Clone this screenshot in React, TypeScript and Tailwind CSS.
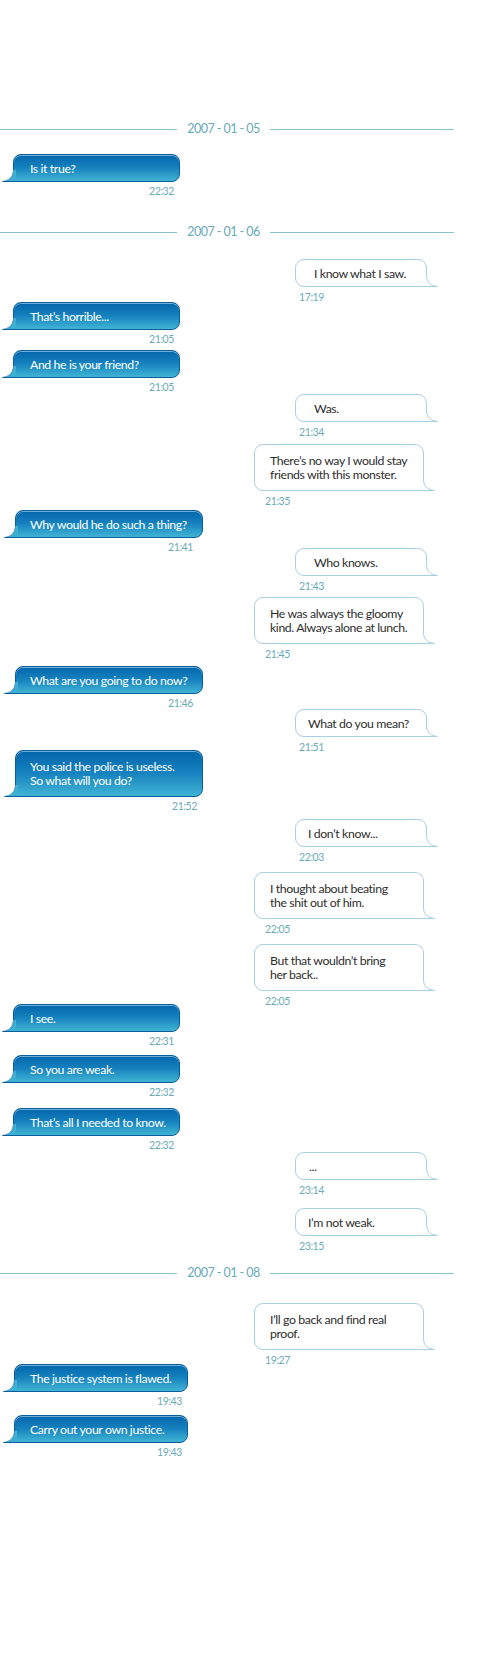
import React from "react";

type Msg =
  | { kind: "date"; label: string; mt: string }
  | {
      kind: "blue";
      lines: string[];
      time: string;
      mt: string;
      ml: string;
      w: string;
      pl: string;
      tsPr: string;
    }
  | {
      kind: "white";
      lines: string[];
      time: string;
      mt: string;
      pl: string;
    };

const items: Msg[] = [
  { kind: "date", label: "2007 - 01 - 05", mt: "mt-[119px]" },
  { kind: "blue", lines: ["Is it true?"], time: "22:32", mt: "mt-[15px]", ml: "ml-[13px]", w: "w-[167px]", pl: "pl-[16px]", tsPr: "pr-[6px]" },
  { kind: "date", label: "2007 - 01 - 06", mt: "mt-[22px]" },
  { kind: "white", lines: ["I know what I saw."], time: "17:19", mt: "mt-[17px]", pl: "pl-[18px]" },
  { kind: "blue", lines: ["That\u2019s horrible..."], time: "21:05", mt: "-mt-[6px]", ml: "ml-[13px]", w: "w-[167px]", pl: "pl-[16px]", tsPr: "pr-[6px]" },
  { kind: "blue", lines: ["And he is your friend?"], time: "21:05", mt: "mt-[2px]", ml: "ml-[13px]", w: "w-[167px]", pl: "pl-[16px]", tsPr: "pr-[6px]" },
  { kind: "white", lines: ["Was."], time: "21:34", mt: "-mt-[2px]", pl: "pl-[18px]" },
  { kind: "white", lines: ["There\u2019s no way I would stay", "friends with this monster."], time: "21:35", mt: "mt-[1px]", pl: "pl-[15px]" },
  { kind: "blue", lines: ["Why would he do such a thing?"], time: "21:41", mt: "-mt-[2px]", ml: "ml-[15px]", w: "w-[188px]", pl: "pl-[14px]", tsPr: "pr-[10px]" },
  { kind: "white", lines: ["Who knows."], time: "21:43", mt: "-mt-[8px]", pl: "pl-[18px]" },
  { kind: "white", lines: ["He was always the gloomy", "kind. Always alone at lunch."], time: "21:45", mt: "mt-[0px]", pl: "pl-[15px]" },
  { kind: "blue", lines: ["What are you going to do now?"], time: "21:46", mt: "mt-[1px]", ml: "ml-[15px]", w: "w-[188px]", pl: "pl-[14px]", tsPr: "pr-[10px]" },
  { kind: "white", lines: ["What do you mean?"], time: "21:51", mt: "-mt-[3px]", pl: "pl-[12px]" },
  { kind: "blue", lines: ["You said the police is useless.", "So what will you do?"], time: "21:52", mt: "-mt-[8px]", ml: "ml-[15px]", w: "w-[188px]", pl: "pl-[14px]", tsPr: "pr-[6px]" },
  { kind: "white", lines: ["I don\u2019t know..."], time: "22:03", mt: "mt-[4px]", pl: "pl-[12px]" },
  { kind: "white", lines: ["I thought about beating", "the shit out of him."], time: "22:05", mt: "mt-[4px]", pl: "pl-[15px]" },
  { kind: "white", lines: ["But that wouldn\u2019t bring", "her back.."], time: "22:05", mt: "mt-[4px]", pl: "pl-[15px]" },
  { kind: "blue", lines: ["I see."], time: "22:31", mt: "-mt-[8px]", ml: "ml-[13px]", w: "w-[167px]", pl: "pl-[16px]", tsPr: "pr-[6px]" },
  { kind: "blue", lines: ["So you are weak."], time: "22:32", mt: "mt-[5px]", ml: "ml-[13px]", w: "w-[167px]", pl: "pl-[16px]", tsPr: "pr-[6px]" },
  { kind: "blue", lines: ["That\u2019s all I needed to know."], time: "22:32", mt: "mt-[7px]", ml: "ml-[13px]", w: "w-[167px]", pl: "pl-[16px]", tsPr: "pr-[6px]" },
  { kind: "white", lines: ["..."], time: "23:14", mt: "-mt-[2px]", pl: "pl-[13px]" },
  { kind: "white", lines: ["I\u2019m not weak."], time: "23:15", mt: "mt-[7px]", pl: "pl-[12px]" },
  { kind: "date", label: "2007 - 01 - 08", mt: "mt-[6px]" },
  { kind: "white", lines: ["I\u2019ll go back and find real", "proof."], time: "19:27", mt: "mt-[20px]", pl: "pl-[15px]" },
  { kind: "blue", lines: ["The justice system is flawed."], time: "19:43", mt: "-mt-[7px]", ml: "ml-[14px]", w: "w-[174px]", pl: "pl-[15px]", tsPr: "pr-[6px]" },
  { kind: "blue", lines: ["Carry out your own justice."], time: "19:43", mt: "mt-[5px]", ml: "ml-[14px]", w: "w-[174px]", pl: "pl-[15px]", tsPr: "pr-[6px]" },
];

function DateRow({ label, mt }: { label: string; mt: string }) {
  return (
    <div className={`flex h-[20px] items-center ${mt}`}>
      <div className="h-px w-[177px] bg-[#8cc2cc]" />
      <div className="w-[93px] text-center text-[12.5px] tracking-[-0.55px] leading-[20px] text-[#68aab7]">{label}</div>
      <div className="h-px w-[184px] bg-[#8cc2cc]" />
    </div>
  );
}

function BlueBubble(m: Extract<Msg, { kind: "blue" }>) {
  const two = m.lines.length > 1;
  return (
    <div className={`flex flex-col ${m.mt} ${m.ml} ${m.w}`}>
      <div
        className={`relative flex flex-col justify-center rounded-[8px] rounded-bl-none border border-[#0b5e9e] bg-gradient-to-b from-[#0465ab] via-[#1683bf] to-[#40b4d4] shadow-[inset_0_1px_0_rgba(160,205,235,0.7)] text-[12.3px] tracking-[-0.4px] leading-[14px] text-white ${m.pl} ${two ? "h-[47px] pt-[1px]" : "h-[28px] pt-[2px]"}`}
      >
        <svg className="absolute -left-[12px] -bottom-[1px]" width="14" height="12" viewBox="0 0 14 12">
          <path d="M11 0 L14 0 L14 12 L0.5 12 C6 11 11 8 11 0 Z" fill="#3cafd2" />
          <path d="M11.5 0 C11.5 7 7 10.5 0.5 11.5" fill="none" stroke="#4f96c4" strokeWidth="1" />
          <path d="M0.5 11.5 L14 11.5" fill="none" stroke="#0b5e9e" strokeWidth="1" />
        </svg>
        {m.lines.map((l, i) => (
          <div key={i} className="whitespace-nowrap">{l}</div>
        ))}
      </div>
      <div className={`h-[18px] text-right text-[10.5px] tracking-[-0.4px] leading-[18px] text-[#6aabb8] ${m.tsPr}`}>{m.time}</div>
    </div>
  );
}

function WhiteBubble(m: Extract<Msg, { kind: "white" }>) {
  const two = m.lines.length > 1;
  return (
    <div className={`flex flex-col ${m.mt} ${two ? "ml-[254px] w-[170px]" : "ml-[295px] w-[132px]"}`}>
      <div
        className={`relative flex flex-col justify-center rounded-[9px] rounded-br-none border border-[#a9cfe3] bg-white text-[12.3px] tracking-[-0.4px] leading-[14px] text-[#2e2e2e] ${m.pl} ${two ? "h-[47px] pt-[1px]" : "h-[28px] pt-[2px]"}`}
      >
        <svg className="absolute -right-[12px] -bottom-[1px]" width="14" height="12" viewBox="0 0 14 12">
          <path d="M0 0 L2.5 0 C2.5 7 6 10.5 13.5 11.5 L0 12 Z" fill="#ffffff" />
          <path d="M2.5 0 C2.5 7 6 10.5 13.5 11.5" fill="none" stroke="#a9cfe3" strokeWidth="1" />
          <path d="M0 11.5 L13.5 11.5" fill="none" stroke="#a9cfe3" strokeWidth="1" />
        </svg>
        {m.lines.map((l, i) => (
          <div key={i} className="whitespace-nowrap">{l}</div>
        ))}
      </div>
      <div className={`h-[21px] text-[10.5px] tracking-[-0.4px] leading-[21px] text-[#6aabb8] ${two ? "pl-[11px]" : "pl-[4px]"}`}>{m.time}</div>
    </div>
  );
}

export default function App() {
  return (
    <div className="flex h-[1662px] w-[486px] flex-col overflow-hidden bg-white font-['Lato','Open_Sans',sans-serif]">
      {items.map((m, i) => {
        if (m.kind === "date") return <DateRow key={i} label={m.label} mt={m.mt} />;
        if (m.kind === "blue") return <BlueBubble key={i} {...m} />;
        return <WhiteBubble key={i} {...m} />;
      })}
    </div>
  );
}
